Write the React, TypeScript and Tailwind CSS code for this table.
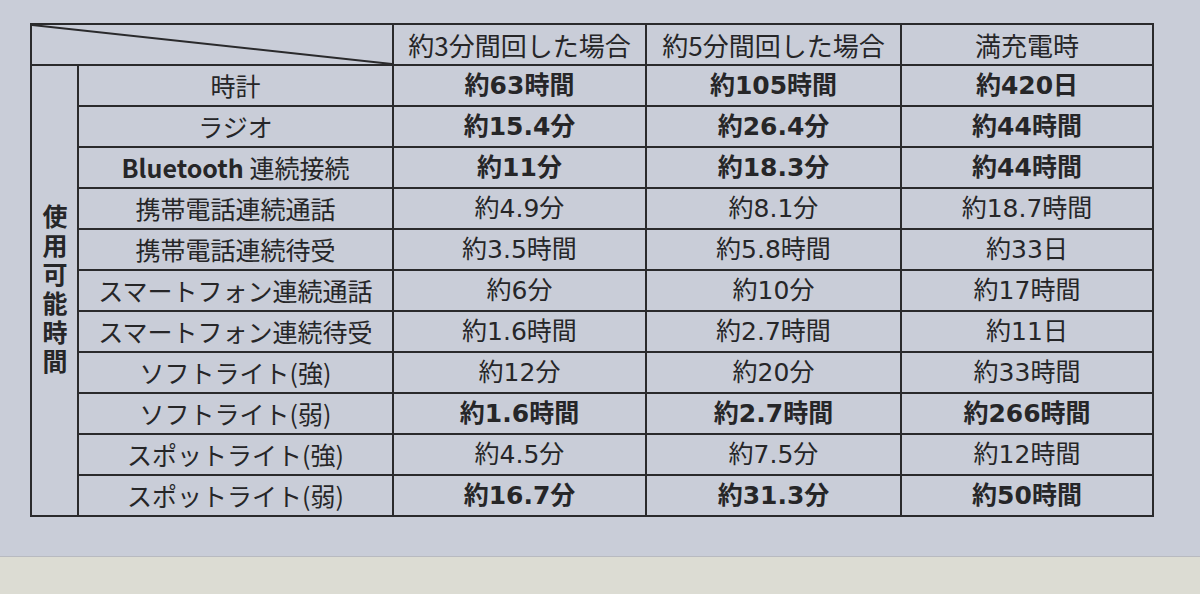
import React from 'react';

interface Row {
    label: React.ReactNode;
    values: string[];
    bold?: boolean;
}

const rows: Row[] = [
    { label: '時計', values: ['約63時間', '約105時間', '約420日'], bold: true },
    { label: 'ラジオ', values: ['約15.4分', '約26.4分', '約44時間'], bold: true },
    {
        label: (
            <>
                <span className="font-bold">Bluetooth</span> 連続接続
            </>
        ),
        values: ['約11分', '約18.3分', '約44時間'],
        bold: true,
    },
    { label: '携帯電話連続通話', values: ['約4.9分', '約8.1分', '約18.7時間'] },
    { label: '携帯電話連続待受', values: ['約3.5時間', '約5.8時間', '約33日'] },
    { label: 'スマートフォン連続通話', values: ['約6分', '約10分', '約17時間'] },
    { label: 'スマートフォン連続待受', values: ['約1.6時間', '約2.7時間', '約11日'] },
    { label: 'ソフトライト(強)', values: ['約12分', '約20分', '約33時間'] },
    { label: 'ソフトライト(弱)', values: ['約1.6時間', '約2.7時間', '約266時間'], bold: true },
    { label: 'スポットライト(強)', values: ['約4.5分', '約7.5分', '約12時間'] },
    { label: 'スポットライト(弱)', values: ['約16.7分', '約31.3分', '約50時間'], bold: true },
];

const cell = 'border-2 border-[#2a2a2c] h-[41px] p-0 text-center align-middle leading-none';

export default function App() {
    return (
        <div
            className="w-[1200px] h-[594px] flex flex-col bg-[#c9cdd8] text-[#262628] overflow-hidden"
            style={{ fontFamily: '"Noto Sans CJK JP", "Noto Sans", sans-serif' }}
        >
            <div className="h-[556px] pl-[30px] pt-[23px]">
                <table className="border-collapse table-fixed w-[1122px] text-[25px]">
                    <colgroup>
                        <col className="w-[47px]" />
                        <col className="w-[315px]" />
                        <col className="w-[253px]" />
                        <col className="w-[255px]" />
                        <col className="w-[252px]" />
                    </colgroup>
                    <thead>
                        <tr>
                            <th colSpan={2} className={`${cell} relative`}>
                                <svg
                                    className="absolute inset-0 w-full h-full"
                                    viewBox="0 0 100 100"
                                    preserveAspectRatio="none"
                                >
                                    <line x1="0" y1="0" x2="100" y2="100" stroke="#2a2a2c" strokeWidth="2" vectorEffect="non-scaling-stroke" />
                                </svg>
                            </th>
                            <th className={`${cell} font-normal text-[26px]`}>約3分間回した場合</th>
                            <th className={`${cell} font-normal text-[26px]`}>約5分間回した場合</th>
                            <th className={`${cell} font-normal text-[26px]`}>満充電時</th>
                        </tr>
                    </thead>
                    <tbody>
                        {rows.map((row, i) => (
                            <tr key={i}>
                                {i === 0 && (
                                    <td rowSpan={rows.length} className={cell}>
                                        <div className="flex justify-center">
                                            <span className="[writing-mode:vertical-rl] [text-orientation:upright] font-bold text-[25px] leading-none tracking-[4px]">
                                                使用可能時間
                                            </span>
                                        </div>
                                    </td>
                                )}
                                <td className={cell}>{row.label}</td>
                                {row.values.map((v, j) => (
                                    <td
                                        key={j}
                                        className={`${cell} font-['DejaVu_Sans','Noto_Sans_CJK_JP',sans-serif] ${row.bold ? 'font-bold' : 'font-normal'}`}
                                    >
                                        {v}
                                    </td>
                                ))}
                            </tr>
                        ))}
                    </tbody>
                </table>
            </div>
            <div className="flex-1 bg-[#dcdcd3] border-t border-[#b8bac0]" />
        </div>
    );
}
